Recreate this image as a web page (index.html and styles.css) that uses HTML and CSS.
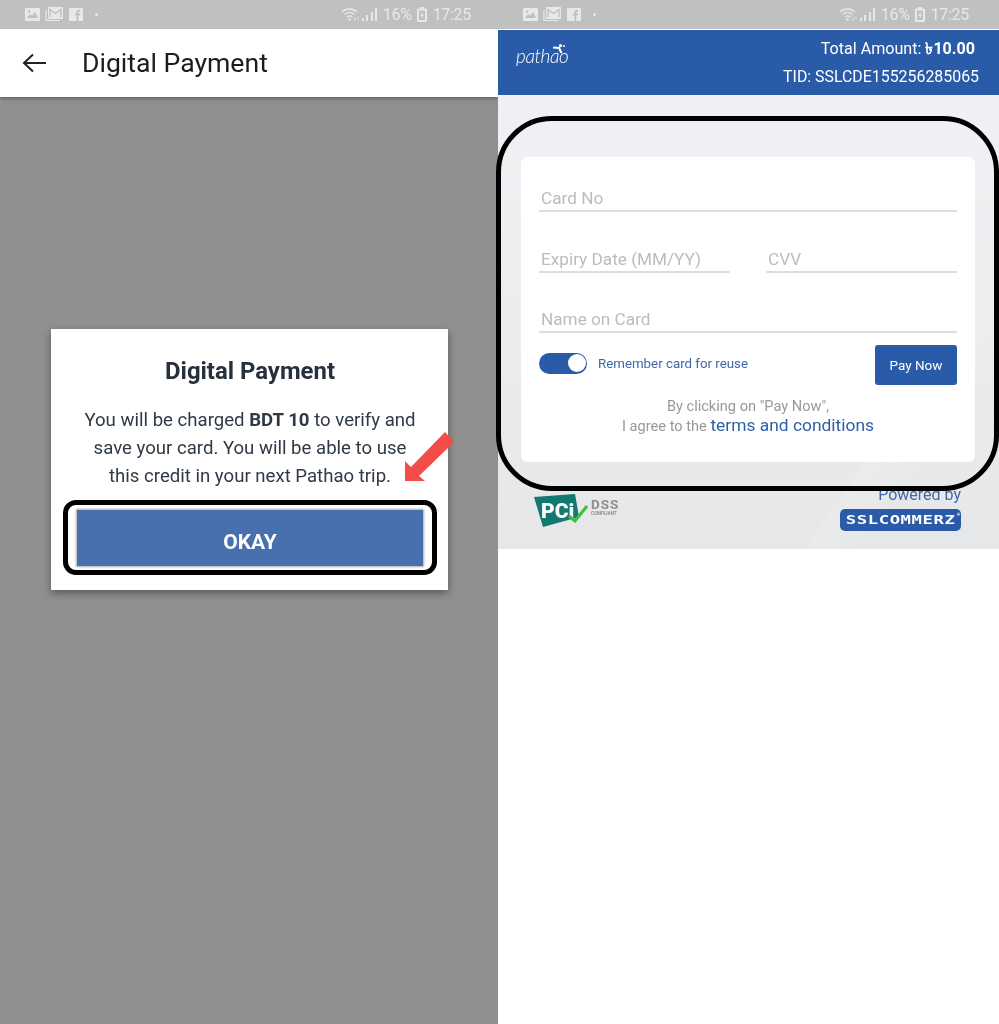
FILE: index.html
```html
<!DOCTYPE html>
<html lang="en">
<head>
    <meta charset="UTF-8">
    <title>Digital Payment</title>
    <link rel="stylesheet" href="styles.css">
</head>
<body>
    <div class="page">
        <section class="phone phone-left">
            <div class="status">
                <div class="status-icons">
                    <svg class="ic-pic" viewBox="0 0 15 13"><path fill="#e8e8e8" d="M1 0h13a1 1 0 0 1 1 1v11a1 1 0 0 1-1 1H1a1 1 0 0 1-1-1V1a1 1 0 0 1 1-1z"/><path fill="#c0c0c0" d="M2 10l3-4 2 2 3-4 3 6z"/><circle cx="4" cy="3.500" r="1.200" fill="#c0c0c0"/></svg>
                    <svg class="ic-mail" viewBox="0 0 18 15"><path fill="none" stroke="#e8e8e8" stroke-width="1.200" d="M1 3v10.500h14"/><path fill="#e8e8e8" d="M3 0h15v12H3z"/><path fill="none" stroke="#c0c0c0" stroke-width="1.400" d="M5 10V2.500l5.500 4 5.500-4V10"/></svg>
                    <svg class="ic-fb" viewBox="0 0 14 13"><path fill="#e8e8e8" d="M1 0h12a1 1 0 0 1 1 1v11a1 1 0 0 1-1 1H1a1 1 0 0 1-1-1V1a1 1 0 0 1 1-1z"/><path fill="#c0c0c0" d="M7.500 13V7.500H6V5.500h1.500V4c0-1.500 1-2.200 2.300-2.200h1.300v2H10c-.5 0-.7.200-.7.700v1h1.800l-.3 2H9.300V13z"/></svg>
                    <span class="status-dot"></span>
                </div>
                <div class="status-right">
                    <svg class="ic-wifi" viewBox="0 0 20 15"><g fill="none" stroke="#e8e8e8" stroke-width="1.300"><path d="M1 5c4-4 11-4 15 0"/><path d="M3.500 7.500c3-2.500 7-2.500 10 0"/><path d="M6 10c1.800-1.300 3.600-1.300 5.400 0"/></g><circle cx="8.500" cy="12.500" r="1.300" fill="#e8e8e8"/><path stroke="#e8e8e8" d="M14 10v4M17 9.500v3"/></svg>
                    <div class="signal"><i class="s1"></i><i class="s2"></i><i class="s3"></i><i class="s4"></i></div>
                    <span class="pct">16%</span>
                    <svg class="ic-batt" viewBox="0 0 10 15"><path fill="#e8e8e8" d="M3 0h4v1.500h2a1 1 0 0 1 1 1V14a1 1 0 0 1-1 1H1a1 1 0 0 1-1-1V2.500a1 1 0 0 1 1-1h2z"/><path fill="#c0c0c0" d="M2 3.500h6v9.500H2z"/><path fill="#e8e8e8" d="M5.500 4.500L3.500 9H5l-.5 3L7 7.500H5.500z"/></svg>
                    <span class="clock">17:25</span>
                </div>
            </div>
            <header class="appbar">
                <svg class="back" viewBox="0 0 24 20"><path fill="none" stroke="#222" stroke-width="2" d="M24 10H2M11 1.500L2 10l9 8.500"/></svg>
                <h1>Digital Payment</h1>
            </header>
            <div class="dim">
                <div class="modal">
                    <h2>Digital Payment</h2>
                    <p>You will be charged <b>BDT 10</b> to verify and<br>save your card. You will be able to use<br>this credit in your next Pathao trip.</p>
                    <div class="mark-btn">
                        <button class="okay">OKAY</button>
                    </div>
                    <svg class="red-arrow" viewBox="0 0 56 54"><polygon fill="#f44c47" points="5,51 5,31 11,37 45,2 54,12 19,46 25,51"/></svg>
                </div>
            </div>
        </section>

        <section class="phone phone-right">
            <div class="status">
                <div class="status-icons">
                    <svg class="ic-pic" viewBox="0 0 15 13"><path fill="#e8e8e8" d="M1 0h13a1 1 0 0 1 1 1v11a1 1 0 0 1-1 1H1a1 1 0 0 1-1-1V1a1 1 0 0 1 1-1z"/><path fill="#c0c0c0" d="M2 10l3-4 2 2 3-4 3 6z"/><circle cx="4" cy="3.500" r="1.200" fill="#c0c0c0"/></svg>
                    <svg class="ic-mail" viewBox="0 0 18 15"><path fill="none" stroke="#e8e8e8" stroke-width="1.200" d="M1 3v10.500h14"/><path fill="#e8e8e8" d="M3 0h15v12H3z"/><path fill="none" stroke="#c0c0c0" stroke-width="1.400" d="M5 10V2.500l5.500 4 5.500-4V10"/></svg>
                    <svg class="ic-fb" viewBox="0 0 14 13"><path fill="#e8e8e8" d="M1 0h12a1 1 0 0 1 1 1v11a1 1 0 0 1-1 1H1a1 1 0 0 1-1-1V1a1 1 0 0 1 1-1z"/><path fill="#c0c0c0" d="M7.500 13V7.500H6V5.500h1.500V4c0-1.500 1-2.200 2.300-2.200h1.300v2H10c-.5 0-.7.200-.7.700v1h1.800l-.3 2H9.300V13z"/></svg>
                    <span class="status-dot"></span>
                </div>
                <div class="status-right">
                    <svg class="ic-wifi" viewBox="0 0 20 15"><g fill="none" stroke="#e8e8e8" stroke-width="1.300"><path d="M1 5c4-4 11-4 15 0"/><path d="M3.500 7.500c3-2.500 7-2.500 10 0"/><path d="M6 10c1.800-1.300 3.600-1.300 5.400 0"/></g><circle cx="8.500" cy="12.500" r="1.300" fill="#e8e8e8"/><path stroke="#e8e8e8" d="M14 10v4M17 9.500v3"/></svg>
                    <div class="signal"><i class="s1"></i><i class="s2"></i><i class="s3"></i><i class="s4"></i></div>
                    <span class="pct">16%</span>
                    <svg class="ic-batt" viewBox="0 0 10 15"><path fill="#e8e8e8" d="M3 0h4v1.500h2a1 1 0 0 1 1 1V14a1 1 0 0 1-1 1H1a1 1 0 0 1-1-1V2.500a1 1 0 0 1 1-1h2z"/><path fill="#c0c0c0" d="M2 3.500h6v9.500H2z"/><path fill="#e8e8e8" d="M5.500 4.500L3.500 9H5l-.5 3L7 7.500H5.500z"/></svg>
                    <span class="clock">17:25</span>
                </div>
            </div>
            <header class="paybar">
                <div class="logo">
                    <svg class="rider" viewBox="0 0 14 10"><circle cx="8.500" cy="1.700" r="1.600" fill="#fff"/><circle cx="12" cy="2" r="1" fill="#fff"/><path fill="none" stroke="#fff" stroke-width="2.200" d="M1 3.500l6 .5 2.500 5"/></svg>
                    <span class="logo-text">pathao</span>
                </div>
                <div class="pay-info">
                    <div class="total">Total Amount: <b>৳10.00</b></div>
                    <div class="tid">TID: SSLCDE155256285065</div>
                </div>
            </header>
            <div class="pay-area">
                <div class="ring">
                    <form class="card-box">
                        <div class="field">Card No</div>
                        <div class="field-row">
                            <div class="field">Expiry Date (MM/YY)</div>
                            <div class="field">CVV</div>
                        </div>
                        <div class="field">Name on Card</div>
                        <div class="actions">
                            <div class="remember">
                                <span class="toggle"><span class="knob"></span></span>
                                <span>Remember card for reuse</span>
                            </div>
                            <button type="button" class="pay-now">Pay Now</button>
                        </div>
                        <div class="terms">By clicking on "Pay Now",<br>I agree to the <a href="#">terms and conditions</a></div>
                    </form>
                </div>
                <div class="pay-foot">
                    <div class="pci">
                        <div class="pci-badge"><span>PCi</span></div>
                        <svg class="pci-check" viewBox="0 0 20 18"><path fill="none" stroke="#3fbf3a" stroke-width="3" d="M1 11l6 5L19 1"/></svg>
                        <div class="dss"><b>DSS</b><small>COMPLIANT</small></div>
                    </div>
                    <div class="powered">
                        <span>Powered by</span>
                        <div class="ssl-badge"><span class="ssl-name">SSLCOMMERZ</span><span class="ssl-reg">®</span></div>
                    </div>
                </div>
            </div>
        </section>
    </div>
</body>
</html>
```

FILE: styles.css
```css
* {
    box-sizing: border-box;
}
body {
    margin: 0;
    font-family: Roboto, "Liberation Sans", sans-serif;
    background: #fff;
}
.page {
    display: grid;
    grid-template-columns: 498px 501px;
    height: 1024px;
    overflow: hidden;
}
.phone {
    display: flex;
    flex-direction: column;
    min-width: 0;
    filter: blur(0.45px);
}
.phone-right {
    position: relative;
    z-index: 1;
    background: #fff;
}

/* status bar */
.status {
    height: 29px;
    flex: none;
    background: #c0c0c0;
    display: flex;
    align-items: center;
    justify-content: space-between;
    padding: 0 27px 0 25px;
    color: #e8e8e8;
}
.phone-right .status {
    padding-right: 30px;
}
.status-icons, .status-right {
    display: flex;
    align-items: center;
}
.ic-pic {
    width: 15px;
    height: 13px;
}
.ic-mail {
    width: 18px;
    height: 15px;
    margin-left: 5px;
}
.ic-fb {
    width: 14px;
    height: 13px;
    margin-left: 6px;
}
.status-dot {
    width: 3px;
    height: 3px;
    border-radius: 50%;
    background: #e8e8e8;
    margin-left: 12px;
}
.ic-wifi {
    width: 20px;
    height: 15px;
}
.signal {
    display: flex;
    align-items: flex-end;
    gap: 2.300px;
    height: 13px;
    margin-left: 1px;
}
.signal i {
    width: 2px;
    background: #e8e8e8;
}
.s1 { height: 3px; }
.s2 { height: 6px; }
.s3 { height: 9px; }
.s4 { height: 13px; }
.pct, .clock {
    font-size: 16px;
    letter-spacing: -0.3px;
}
.pct {
    margin-left: 6px;
}
.ic-batt {
    width: 10px;
    height: 15px;
    margin-left: 5px;
}
.clock {
    margin-left: 6px;
}

/* left screen */
.appbar {
    height: 68px;
    flex: none;
    background: #fff;
    display: flex;
    align-items: center;
    padding-left: 22px;
    position: relative;
    box-shadow: 0 2px 3px rgba(0, 0, 0, 0.3);
}
.back {
    width: 24px;
    height: 20px;
}
.appbar h1 {
    margin: 0 0 2px 36px;
    font-size: 26.600px;
    font-weight: 400;
    color: #1c1c1c;
}
.dim {
    flex: 1;
    background: #8f9190;
    padding: 232px 50px 0 51px;
}
.modal {
    position: relative;
    height: 261px;
    background: #fff;
    padding: 28px 11px 15px 12px;
    box-shadow: 0 3px 8px rgba(0, 0, 0, 0.4);
    text-align: center;
    color: #2f3a46;
}
.modal h2 {
    margin: 0;
    font-size: 23.900px;
    line-height: 28px;
    font-weight: 700;
    color: #27313d;
}
.modal p {
    margin: 21px -10px 10px;
    font-size: 18.600px;
    line-height: 28px;
}
.mark-btn {
    height: 75px;
    border: 5px solid #000;
    border-radius: 13px;
    padding: 5px 9px 4px;
}
.okay {
    display: block;
    width: 100%;
    height: 100%;
    border: 0;
    padding: 8px 0 0;
    background: #4870ae;
    box-shadow: 0 0 2px 1px rgba(90, 90, 90, 0.5);
    color: #fff;
    font-family: inherit;
    font-size: 21px;
    font-weight: 700;
}
.red-arrow {
    position: absolute;
    left: 349px;
    top: 101px;
    width: 56px;
    height: 54px;
}

/* right screen */
.paybar {
    height: 65px;
    flex: none;
    margin-top: 1px;
    background: #2a5ba8;
    display: flex;
    justify-content: space-between;
    padding: 0 20px 0 18px;
    color: #fff;
    position: relative;
}
.logo {
    position: relative;
    width: 52px;
    padding-top: 14px;
}
.logo-text {
    font-family: Lato, sans-serif;
    font-size: 19px;
    font-style: italic;
    font-weight: 300;
    letter-spacing: -0.4px;
}
.rider {
    position: absolute;
    left: 36px;
    top: 14px;
    width: 14px;
    height: 10px;
}
.pay-info {
    text-align: right;
}
.total {
    margin-top: 9px;
    padding-right: 4px;
    font-size: 16.100px;
    line-height: 20px;
}
.tid {
    margin-top: 8px;
    font-size: 15.900px;
    line-height: 20px;
}
.pay-area {
    height: 454px;
    flex: none;
    background:
        linear-gradient(125deg, transparent 76%, rgba(255, 255, 255, 0.14) 76.5%, transparent 84%),
        linear-gradient(180deg, #f0f1f4 0%, #eceef0 35%, #e6e7e8 100%);
}
.ring {
    position: relative;
    z-index: 1;
    height: 375px;
    width: 503px;
    margin: 21px 0 0 -2px;
    border: 5px solid #000;
    border-radius: 56px;
    padding: 36px 19px 24px 20px;
}
.card-box {
    height: 305px;
    background: #fff;
    border-radius: 6px;
    padding: 19px 18px 0;
}
.field {
    height: 36px;
    margin-bottom: 24.500px;
    padding: 12px 2px 0;
    border-bottom: 2px solid #dedede;
    color: #bcbcbc;
    font-size: 17.200px;
    line-height: 20px;
    white-space: nowrap;
}
.field-row {
    display: grid;
    grid-template-columns: 191px 191px;
    justify-content: space-between;
}
.actions {
    display: flex;
    justify-content: space-between;
    margin-top: -12.500px;
}
.remember {
    display: flex;
    align-items: center;
    gap: 11px;
    height: 36px;
    color: #3f68a8;
    font-size: 13.300px;
}
.toggle {
    display: flex;
    justify-content: flex-end;
    width: 48px;
    height: 21px;
    border-radius: 11px;
    background: #2a5ba8;
    padding: 1.500px;
}
.knob {
    width: 18px;
    height: 18px;
    border-radius: 50%;
    background: #fff;
}
.pay-now {
    width: 82px;
    height: 40px;
    border: 0;
    border-radius: 3px;
    background: #2a5ba8;
    color: #fff;
    font-family: inherit;
    font-size: 13.500px;
}
.terms {
    margin-top: 12px;
    text-align: center;
    color: #999;
    font-size: 14.600px;
    line-height: 19px;
}
.terms a {
    color: #2f5fa8;
    font-size: 17.400px;
    line-height: 19px;
    text-decoration: none;
}
.pay-foot {
    display: flex;
    justify-content: space-between;
    padding: 0 38px 0 36px;
    margin-top: -5px;
    position: relative;
}
.pci {
    position: relative;
    width: 86px;
    height: 34px;
    margin-top: 8px;
}
.pci-badge {
    position: absolute;
    left: 0;
    top: 0;
    width: 46px;
    height: 34px;
    background: #11796f;
    clip-path: polygon(0 3px, 41px 0, 45px 23px, 9px 33px);
}
.pci-badge span {
    display: block;
    padding: 6px 0 0 7px;
    color: #fff;
    font-size: 21px;
    font-weight: 900;
    line-height: 22px;
}
.pci-check {
    position: absolute;
    left: 34px;
    top: 11px;
    width: 20px;
    height: 18px;
}
.dss {
    position: absolute;
    left: 57px;
    top: 4px;
    color: #8f8f8f;
    line-height: 1;
}
.dss b {
    display: block;
    font-size: 13.500px;
    letter-spacing: 1px;
}
.dss small {
    display: block;
    font-size: 4.500px;
    font-weight: 700;
}
.powered {
    display: flex;
    flex-direction: column;
    align-items: flex-end;
    color: #3f68a8;
    font-size: 16px;
    line-height: 18px;
}
.ssl-badge {
    position: relative;
    width: 121px;
    height: 22px;
    margin-top: 5px;
    border-radius: 5px;
    background: #2a5ba8;
    color: #fff;
    font-family: "DejaVu Sans Mono", monospace;
    font-size: 11.500px;
    font-weight: 700;
    line-height: 22px;
    text-align: center;
}
.ssl-name {
    display: inline-block;
    letter-spacing: 0.4px;
    transform: scaleX(1.5);
}
.ssl-reg {
    position: absolute;
    right: 1px;
    top: 3px;
    font-size: 5px;
    line-height: 5px;
}
```
